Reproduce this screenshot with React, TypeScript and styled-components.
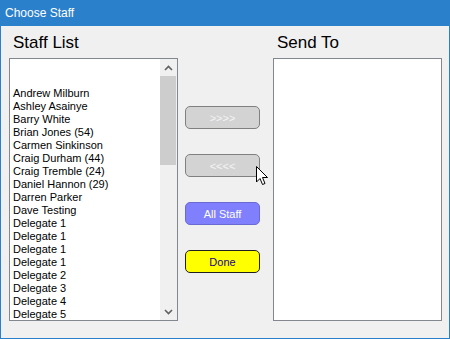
import React from "react";
import styled, { createGlobalStyle } from "styled-components";

const GlobalStyle = createGlobalStyle`
  html, body {
    margin: 0;
    padding: 0;
    background: #f0f0f0;
  }
`;

const Window = styled.div`
  position: relative;
  width: 450px;
  height: 339px;
  box-sizing: border-box;
  border: 1px solid #2b80cc;
  border-top: none;
  background: #f0f0f0;
  display: flex;
  flex-direction: column;
  font-family: "Liberation Sans", Arial, sans-serif;
  overflow: hidden;
`;

const TitleBar = styled.div`
  height: 26px;
  flex: none;
  background: #2b80cc;
  color: #ffffff;
  font-size: 12px;
  line-height: 26px;
  margin: 0 -1px;
  padding-left: 5px;
`;

const Body = styled.div`
  display: flex;
  padding-left: 8px;
`;

const Column = styled.div`
  display: flex;
  flex-direction: column;
`;

const Label = styled.div`
  height: 32px;
  box-sizing: border-box;
  padding: 7px 0 0 4px;
  font-size: 17px;
  line-height: 20px;
  color: #000;
`;

const ListBox = styled.div`
  width: 169px;
  height: 263px;
  box-sizing: border-box;
  border: 1px solid #828790;
  background: #fff;
  display: flex;
  overflow: hidden;
`;

const Items = styled.div`
  flex: 1;
  padding: 2px 0 0 3px;
  font-size: 11px;
  line-height: 13px;
  color: #000;
  white-space: nowrap;
  overflow: hidden;
`;

const Item = styled.div`
  height: 13px;
`;

const ScrollBar = styled.div`
  width: 17px;
  flex: none;
  background: #f0f0f0;
  display: flex;
  flex-direction: column;
  align-items: center;
`;

const Arrow = styled.div`
  height: 17px;
  width: 17px;
  display: flex;
  align-items: center;
  justify-content: center;
`;

const Thumb = styled.div`
  width: 16px;
  height: 89px;
  margin-left: -1px;
  background: #cdcdcd;
`;

const Spacer = styled.div`
  flex: 1;
`;

const Buttons = styled.div`
  display: flex;
  flex-direction: column;
  gap: 25px;
  padding-top: 80px;
  margin: 0 13px 0 7px;
`;

const Btn = styled.div<{ $bg: string; $fg: string; $border: string }>`
  width: 75px;
  height: 23px;
  box-sizing: border-box;
  border: 1px solid ${(p) => p.$border};
  border-radius: 5px;
  background: ${(p) => p.$bg};
  color: ${(p) => p.$fg};
  font-size: 11px;
  display: flex;
  align-items: center;
  justify-content: center;
`;

const Cursor = styled.svg`
  position: absolute;
  left: 255px;
  top: 166px;
`;

const staff = [
  "",
  "",
  "Andrew Milburn",
  "Ashley Asainye",
  "Barry White",
  "Brian Jones (54)",
  "Carmen Sinkinson",
  "Craig Durham (44)",
  "Craig Tremble (24)",
  "Daniel Hannon (29)",
  "Darren Parker",
  "Dave Testing",
  "Delegate 1",
  "Delegate 1",
  "Delegate 1",
  "Delegate 1",
  "Delegate 2",
  "Delegate 3",
  "Delegate 4",
  "Delegate 5",
];

const Chevron = ({ up }: { up?: boolean }) => (
  <svg width="9" height="6" viewBox="0 0 9 6">
    <path
      d={up ? "M1 5 L4.5 1.5 L8 5" : "M1 1 L4.5 4.5 L8 1"}
      fill="none"
      stroke="#606060"
      strokeWidth="1.6"
    />
  </svg>
);

export default function App() {
  return (
    <>
      <GlobalStyle />
      <Window>
        <TitleBar>Choose Staff</TitleBar>
        <Body>
          <Column>
            <Label>Staff List</Label>
            <ListBox>
              <Items>
                {staff.map((s, i) => (
                  <Item key={i}>{s}</Item>
                ))}
              </Items>
              <ScrollBar>
                <Arrow>
                  <Chevron up />
                </Arrow>
                <Thumb />
                <Spacer />
                <Arrow>
                  <Chevron />
                </Arrow>
              </ScrollBar>
            </ListBox>
          </Column>
          <Buttons>
            <Btn $bg="#d3d3d3" $fg="#f4f4f4" $border="#808080">&gt;&gt;&gt;&gt;</Btn>
            <Btn $bg="#d3d3d3" $fg="#f4f4f4" $border="#808080">&lt;&lt;&lt;&lt;</Btn>
            <Btn $bg="#8080ff" $fg="#ffffff" $border="#6a6ad0">All Staff</Btn>
            <Btn $bg="#ffff00" $fg="#1a0080" $border="#202020">Done</Btn>
          </Buttons>
          <Column>
            <Label>Send To</Label>
            <ListBox />
          </Column>
        </Body>
        <Cursor width="13" height="20" viewBox="0 0 13 20">
          <path
            d="M0.5 0.5 L0.5 16 L4 12.5 L6.5 18.5 L9 17.5 L6.5 11.5 L11.5 11.5 Z"
            fill="#fff"
            stroke="#000"
            strokeWidth="1"
          />
        </Cursor>
      </Window>
    </>
  );
}
